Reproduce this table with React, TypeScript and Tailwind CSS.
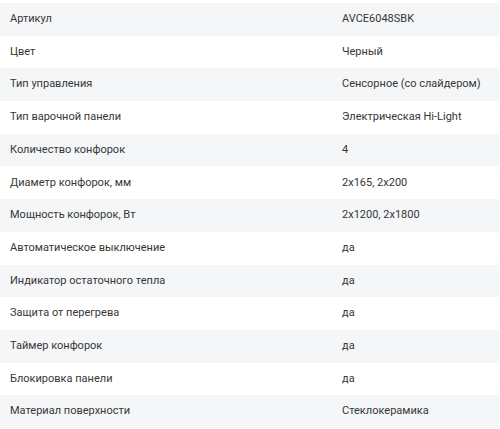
const specs = [
  ['Артикул', 'AVCE6048SBK'],
  ['Цвет', 'Черный'],
  ['Тип управления', 'Сенсорное (со слайдером)'],
  ['Тип варочной панели', 'Электрическая Hi-Light'],
  ['Количество конфорок', '4'],
  ['Диаметр конфорок, мм', '2x165, 2x200'],
  ['Мощность конфорок, Вт', '2x1200, 2x1800'],
  ['Автоматическое выключение', 'да'],
  ['Индикатор остаточного тепла', 'да'],
  ['Защита от перегрева', 'да'],
  ['Таймер конфорок', 'да'],
  ['Блокировка панели', 'да'],
  ['Материал поверхности', 'Стеклокерамика'],
];

const App = () => {
  return (
    <div className="w-[499px] bg-white pt-[3px] font-['Roboto',sans-serif] text-[11px] text-[#363636]">
      {specs.map(([label, value], index) => (
        <div
          key={label}
          className={`flex h-[32.7px] items-center whitespace-nowrap ${index % 2 === 0 ? 'bg-[#f5f6f8]' : 'bg-white'}`}
        >
          <div className="w-[332px] pl-[10px]">{label}</div>
          <div className="flex-1 pl-[10px]">{value}</div>
        </div>
      ))}
    </div>
  );
};

export default App;
